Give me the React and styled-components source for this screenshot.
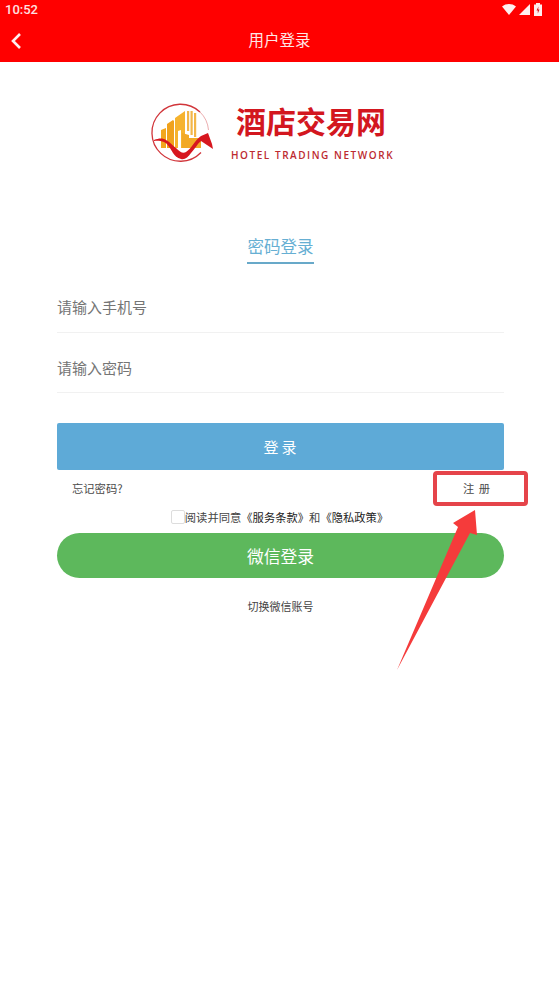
import React from "react";
import styled, { createGlobalStyle } from "styled-components";

const GlobalStyle = createGlobalStyle`
  html, body {
    margin: 0;
    padding: 0;
    background: #ffffff;
  }
  * {
    box-sizing: border-box;
  }
`;

const Page = styled.div`
  position: relative;
  width: 559px;
  height: 997px;
  overflow: hidden;
  background: #ffffff;
  font-family: "Noto Sans CJK SC", "Noto Sans", sans-serif;
`;

const Header = styled.header`
  height: 62px;
  background: #ff0000;
  color: #ffffff;
`;

const StatusBar = styled.div`
  height: 19px;
  padding: 0 16px 0 5px;
  display: flex;
  align-items: center;
  justify-content: space-between;
`;

const Time = styled.span`
  font-family: Roboto, sans-serif;
  font-size: 13px;
  font-weight: 500;
  color: #ffe0e0;
`;

const StatusIcons = styled.div`
  display: flex;
  align-items: center;
  gap: 3px;
`;

const NavBar = styled.div`
  height: 43px;
  padding-left: 10px;
  display: flex;
  align-items: center;
  position: relative;
`;

const NavTitle = styled.h1`
  position: absolute;
  left: 0;
  right: 0;
  top: 7px;
  margin: 0;
  text-align: center;
  font-size: 15.5px;
  line-height: 26px;
  font-weight: 400;
  color: #ffe6e6;
`;

const LogoRow = styled.div`
  height: 66px;
  margin-top: 38px;
  padding-left: 150px;
  display: flex;
  align-items: center;
  gap: 15px;
`;

const LogoText = styled.div`
  display: flex;
  flex-direction: column;
  align-items: flex-start;
  margin-top: -2px;
`;

const LogoName = styled.div`
  font-size: 30px;
  line-height: 36px;
  font-weight: 700;
  color: #d3171f;
  margin-left: 5px;
  white-space: nowrap;
`;

const LogoSub = styled.div`
  font-family: "Open Sans", sans-serif;
  font-size: 10px;
  line-height: 14px;
  font-weight: 600;
  letter-spacing: 1.55px;
  color: #bd2a30;
  margin-top: 10px;
  white-space: nowrap;
`;

const Tabs = styled.div`
  margin-top: 64px;
  padding-left: 2px;
  display: flex;
  justify-content: center;
`;

const Tab = styled.div`
  width: 67px;
  height: 34px;
  font-size: 16.5px;
  line-height: 32px;
  text-align: center;
  color: #66afd3;
  border-bottom: 2px solid #68a9c9;
`;

const Form = styled.div`
  margin: 0 55px 0 57px;
  display: flex;
  flex-direction: column;
`;

const InputRow = styled.div`
  height: ${(props) => props.height}px;
  display: flex;
  align-items: center;
  padding-top: ${(props) => props.offset}px;
  font-size: 15px;
  color: #757575;
  border-bottom: 1px solid #f1f1f1;
`;

const LoginButton = styled.button`
  margin-top: 30px;
  height: 47px;
  border: 0;
  border-radius: 2px;
  background: #5eaad7;
  color: #ffffff;
  font-family: inherit;
  font-size: 15px;
  letter-spacing: 3px;
  padding: 0 0 0 2px;
`;

const LinkRow = styled.div`
  height: 35px;
  padding: 0 13px 0 15px;
  display: flex;
  align-items: center;
  justify-content: space-between;
  font-size: 11.3px;
  color: #4a4a4a;
`;

const RegisterLink = styled.span`
  letter-spacing: 1px;
`;

const Agree = styled.div`
  height: 23px;
  display: flex;
  align-items: center;
  justify-content: center;
  font-size: 11.3px;
  color: #444444;
  padding-right: 2px;
`;

const Checkbox = styled.span`
  width: 14px;
  height: 14px;
  border: 1px solid #dddddd;
  border-radius: 2px;
  background: #ffffff;
`;

const Strong = styled.span`
  color: #1c1c1c;
`;

const WechatButton = styled.button`
  margin-top: 5px;
  height: 45px;
  border: 0;
  border-radius: 23px;
  background: #5db85c;
  color: #ffffff;
  font-family: inherit;
  font-size: 16.8px;
`;

const SwitchAccount = styled.div`
  margin-top: 20px;
  text-align: center;
  font-size: 11px;
  line-height: 16px;
  color: #444444;
`;

const Highlight = styled.div`
  position: absolute;
  left: 433px;
  top: 471px;
  width: 95px;
  height: 35px;
  border: 4px solid #e5444a;
  border-radius: 4px;
`;

const Arrow = styled.svg`
  position: absolute;
  left: 390px;
  top: 500px;
`;

const HotelLogo = () => (
  <svg width="66" height="66" viewBox="0 0 66 66">
    <path d="M51 52.500A28.500 28.500 0 1 1 50 12" fill="none" stroke="#d1353a" strokeWidth="1.3" />
    <path d="M50 12A28.500 28.500 0 0 1 58.500 30" fill="none" stroke="#e38a8c" strokeWidth="0.7" />
    <path d="M11 30l5-2v20h-5z" fill="#f2a71f" />
    <path d="M17 24l6-4l1 1v27h-7z" fill="#f0a21c" />
    <path d="M25 18l10-7v37H31V30l-3 1v17h-3z" fill="#f6b32e" />
    <path d="M37 11h2.200v20h-2.200zM40.500 11h2.200v24h-2.200zM44 13h2.200v24h-2.200z" fill="#f3b648" />
    <path d="M32 33l7 2v3h12v10H32z" fill="#f2a926" />
    <path d="M4 40C9 38 13 38 16 40C20 42 23 46 26 48C30 52 33 54 36 52C41 49 46 39 51 36L58 33L62 44L63 49L54 43L51 41C47 44 45 49 41 53C38 57 35 60 31 59C27 58 25 56 23 53C20 48 18 44 14 42C10 40.500 7 40.500 4 41z" fill="#d7171f" />
  </svg>
);

const App = () => {
  return (
    <Page>
      <GlobalStyle />
      <Header>
        <StatusBar>
          <Time>10:52</Time>
          <StatusIcons>
            <svg width="14" height="11" viewBox="0 0 14 11">
              <path d="M0 2.500C4 -0.800 10 -0.800 14 2.500L7 11z" fill="#ffeeee" />
            </svg>
            <svg width="11" height="11" viewBox="0 0 11 11">
              <path d="M11 0V11H0z" fill="#ffeeee" />
            </svg>
            <svg width="10" height="13" viewBox="0 0 10 13">
              <path d="M3 0h4v1.500h2V13H1V1.500h2z" fill="#ffeeee" />
              <path d="M5.500 3.500L3.500 7.500h1.300V10.500L6.500 6.500H5.200z" fill="#d3171f" />
            </svg>
          </StatusIcons>
        </StatusBar>
        <NavBar>
          <svg width="12" height="18" viewBox="0 0 12 18">
            <path d="M10 2L3 9l7 7" fill="none" stroke="#ffeeee" strokeWidth="2.6" />
          </svg>
          <NavTitle>用户登录</NavTitle>
        </NavBar>
      </Header>

      <LogoRow>
        <HotelLogo />
        <LogoText>
          <LogoName>酒店交易网</LogoName>
          <LogoSub>HOTEL TRADING NETWORK</LogoSub>
        </LogoText>
      </LogoRow>

      <Tabs>
        <Tab>密码登录</Tab>
      </Tabs>

      <Form>
        <InputRow height={69} offset={16}>请输入手机号</InputRow>
        <InputRow height={60} offset={10}>请输入密码</InputRow>
        <LoginButton>登录</LoginButton>
        <LinkRow>
          <span>忘记密码?</span>
          <RegisterLink>注 册</RegisterLink>
        </LinkRow>
        <Agree>
          <Checkbox />
          <span>
            阅读并同意<Strong>《服务条款》</Strong>和<Strong>《隐私政策》</Strong>
          </span>
        </Agree>
        <WechatButton>微信登录</WechatButton>
        <SwitchAccount>切换微信账号</SwitchAccount>
      </Form>

      <Highlight />
      <Arrow width="100" height="175" viewBox="0 0 100 175">
        <path d="M7 170L68 27L63 23L85 10L87 35L80 33z" fill="#f53b3b" />
      </Arrow>
    </Page>
  );
};

export default App;
